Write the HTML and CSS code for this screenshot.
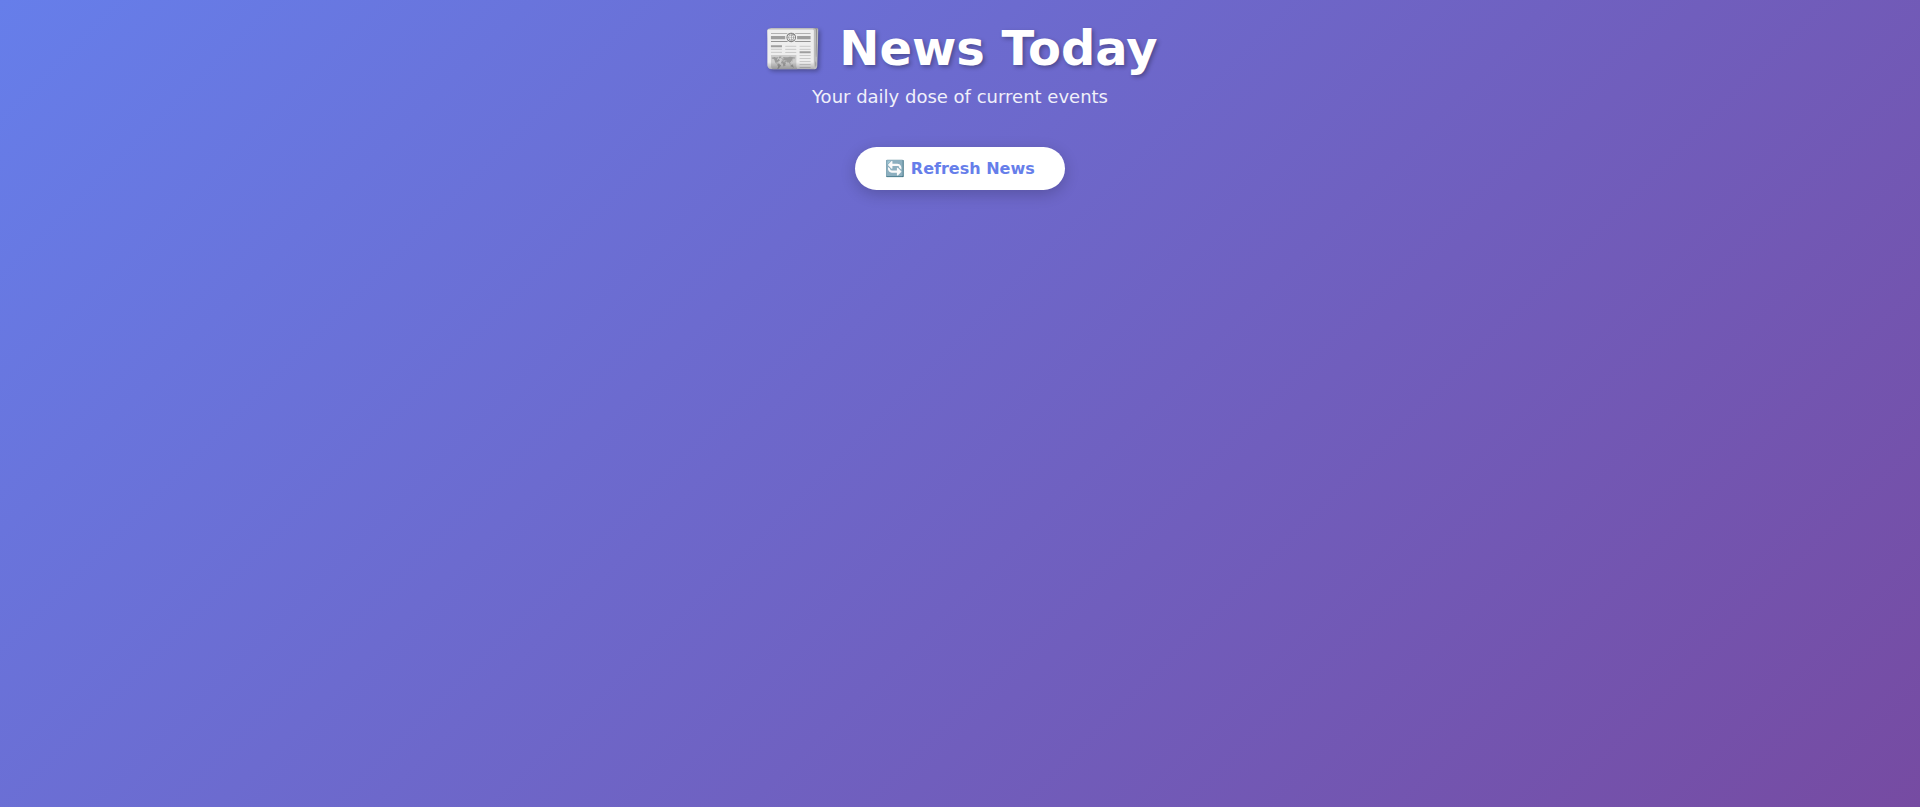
FILE: index.html
```html
<!DOCTYPE html>
<html lang="en">
<head>
    <meta charset="UTF-8">
    <meta name="viewport" content="width=device-width, initial-scale=1.0">
    <title>News Today</title>
    <link rel="stylesheet" href="styles.css">
</head>
<body>
    <div class="container">
        <header class="header">
            <h1>📰 News Today</h1>
            <p>Your daily dose of current events</p>
        </header>

        <div class="controls">
            <button type="button" class="refresh-btn">🔄 Refresh News</button>
        </div>
    </div>
</body>
</html>
```
FILE: styles.css
```css
* {
    margin: 0;
    padding: 0;
    box-sizing: border-box;
}

body {
    font-family: "DejaVu Sans", sans-serif;
    background: linear-gradient(135deg, #667eea 0%, #764ba2 100%);
    min-height: 100vh;
    padding: 20px;
}

.container {
    max-width: 1200px;
    margin: 0 auto;
}

.header {
    text-align: center;
    color: white;
    margin-bottom: 40px;
}

h1 {
    font-size: 48px;
    margin-bottom: 10px;
    text-shadow: 2px 2px 4px rgba(0, 0, 0, 0.3);
}

.header p {
    font-size: 18px;
    line-height: 20px;
    opacity: 0.9;
}

.controls {
    text-align: center;
    margin-bottom: 30px;
}

.refresh-btn {
    background: white;
    color: #667eea;
    border: none;
    padding: 12px 30px;
    font-family: inherit;
    font-size: 16px;
    font-weight: bold;
    border-radius: 25px;
    cursor: pointer;
    box-shadow: 0 4px 15px rgba(0, 0, 0, 0.2);
}
```
